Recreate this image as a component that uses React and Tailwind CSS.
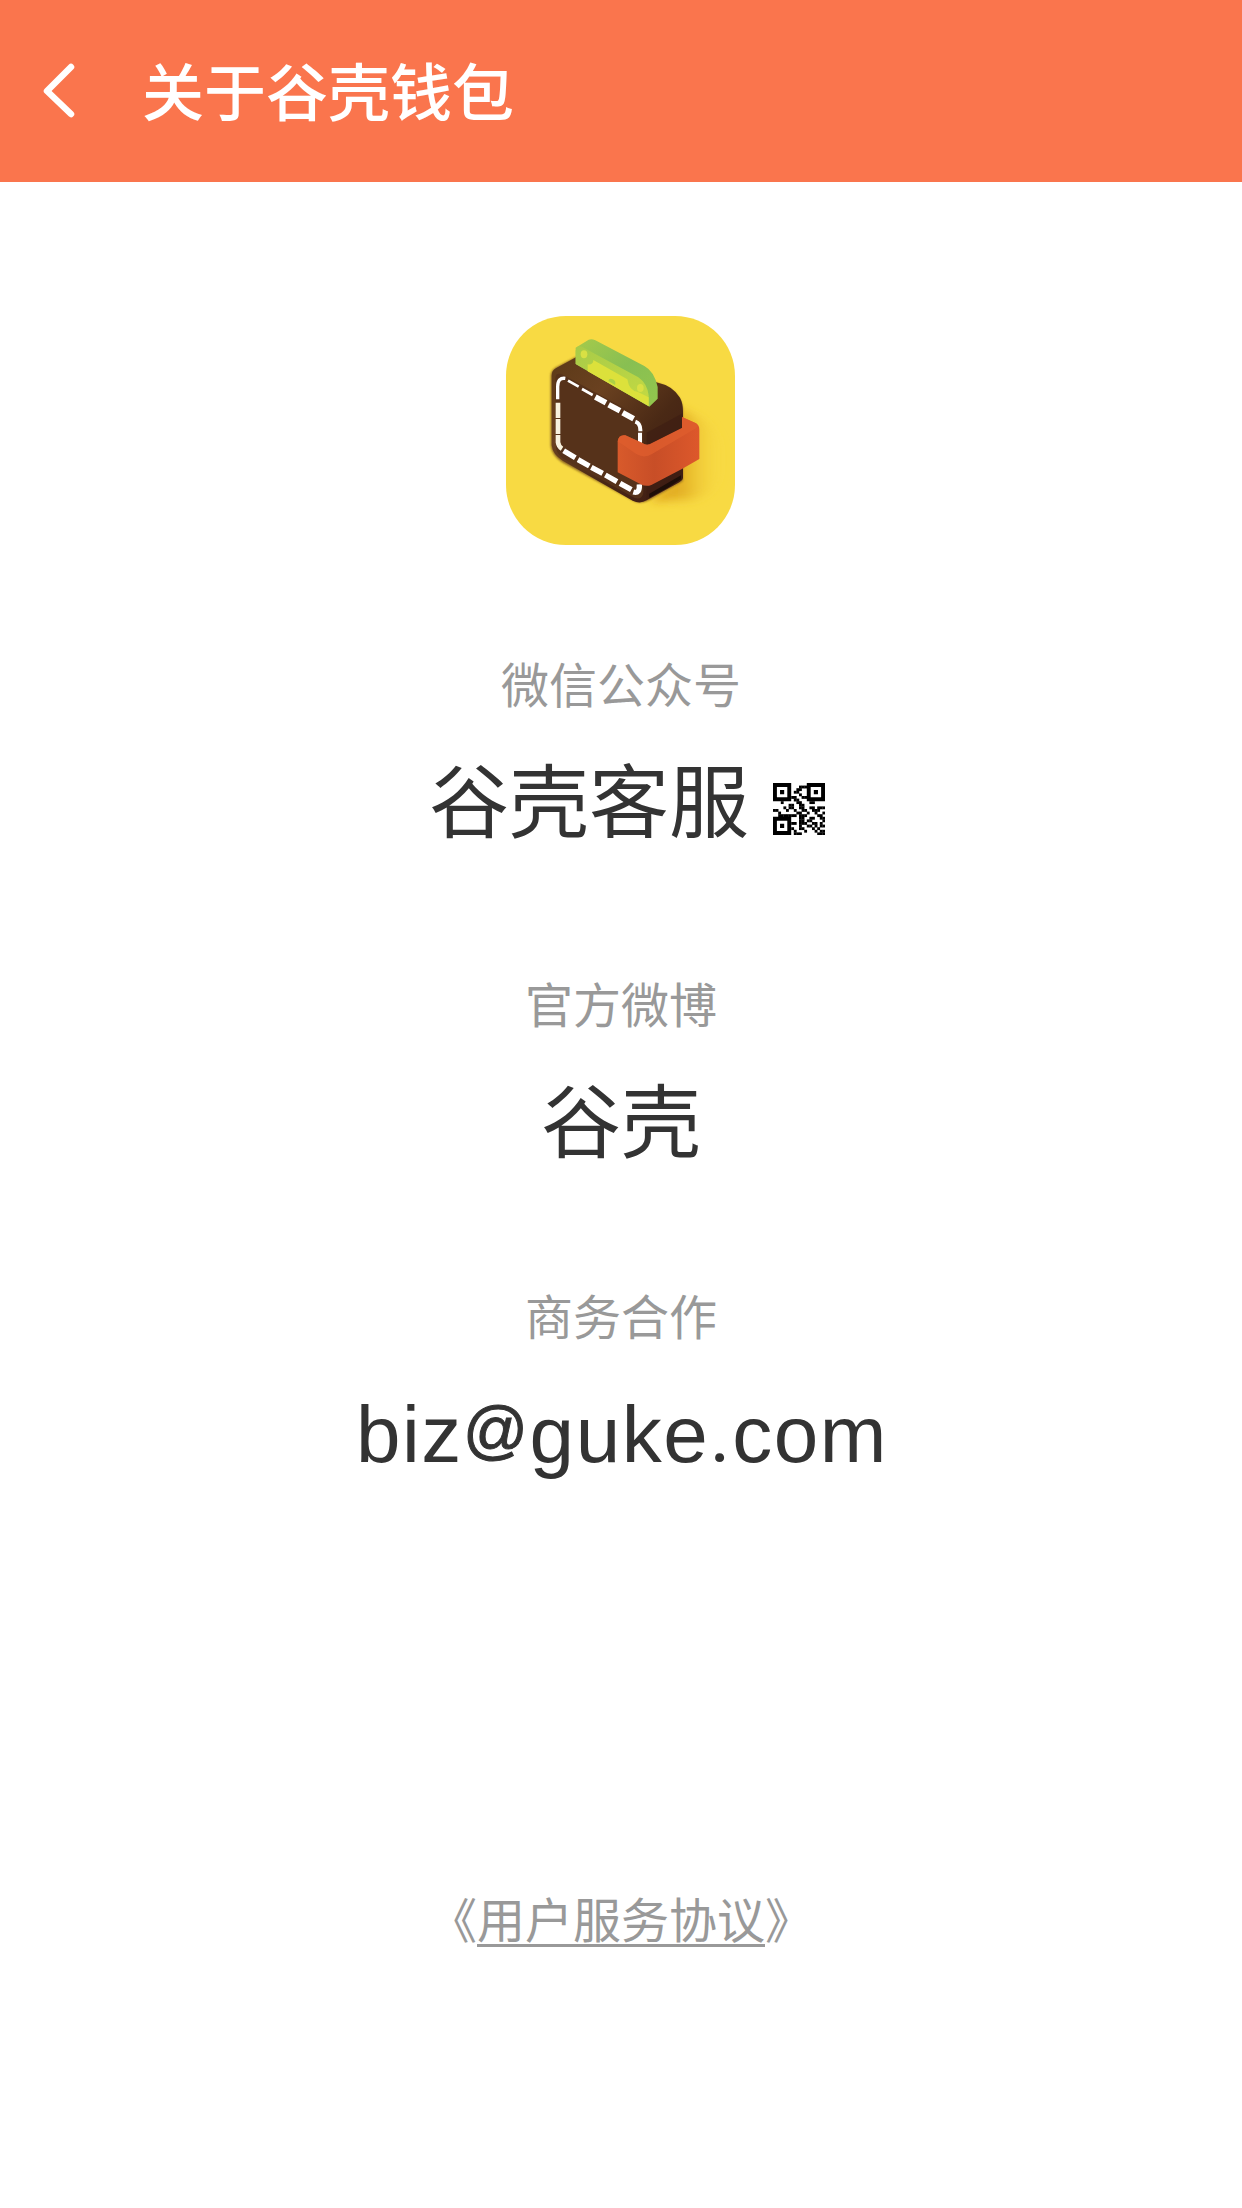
const CJK = "font-['Noto_Sans_CJK_SC',sans-serif]";

function Wallet() {
  return (
    <svg className="mr-px block h-[229px] w-[229px] rounded-[60px]" viewBox="0 0 687 687">
      <defs>
        <linearGradient id="shade" x1="0" y1="0" x2="1" y2="0">
          <stop offset="0" stopColor="#dc9d17" /><stop offset=".45" stopColor="#e5b327" /><stop offset="1" stopColor="#f8da43" stopOpacity="0" />
        </linearGradient>
        <linearGradient id="top" x1="0" y1="0" x2="1" y2="1">
          <stop offset="0" stopColor="#5c3a18" /><stop offset=".3" stopColor="#6a4120" /><stop offset=".62" stopColor="#4a2915" /><stop offset="1" stopColor="#3d1a14" />
        </linearGradient>
        <linearGradient id="green" x1="0" y1="0" x2="1" y2="1">
          <stop offset="0" stopColor="#a5ca4b" /><stop offset=".5" stopColor="#88bf52" /><stop offset="1" stopColor="#93c64d" />
        </linearGradient>
        <linearGradient id="lime" x1="0" y1="0" x2=".7" y2="1">
          <stop offset="0" stopColor="#a8cb48" /><stop offset="1" stopColor="#c0d843" />
        </linearGradient>
        <linearGradient id="strap" x1="0" y1="0" x2="1" y2="0">
          <stop offset="0" stopColor="#d85a2b" /><stop offset=".45" stopColor="#c84e27" /><stop offset="1" stopColor="#dd582b" />
        </linearGradient>
        <filter id="soft" x="-30%" y="-30%" width="160%" height="160%"><feGaussianBlur stdDeviation="14" /></filter>
        <filter id="edge"><feGaussianBlur stdDeviation="3" /></filter>
      </defs>
      <rect width="687" height="687" fill="#f8da43" />
      <path d="M520 275L592 312Q665 370 655 450Q645 530 560 550L430 556L500 500Z" fill="url(#shade)" filter="url(#soft)" />
      <path d="M134 180L134 390Q138 420 170 440L385 556Q405 565 430 552L530 495V280Q525 230 470 207L210 123L148 155Q134 165 134 180Z" fill="#8f6722" filter="url(#edge)" />
      <path d="M137 180Q136 162 152 155L210 124L456 200Q500 209 522 245Q531 262 531 285V485Q530 493 520 499L422 553Q402 565 380 554L170 434Q140 416 137 388Z" fill="url(#top)" />
      <path d="M148 186Q150 166 172 177L382 291Q409 306 412 340V530Q409 552 386 546L172 428Q151 414 150 392Z" fill="#56321a" />
      <path d="M422 350L530 292V490L422 550Z" fill="#3e1d12" opacity=".65" />
      <path d="M430 533L525 478V490L485 515L430 545Z" fill="#1e0e08" />
      <path d="M155 250V212Q155 184 178 187" fill="none" stroke="#fff" strokeWidth="10" />
      <path d="M186 194L218 212M228 219L260 237" fill="none" stroke="#fff" strokeWidth="8" />
      <path d="M268 243L300 260M308 266L342 284M350 290L383 308" fill="none" stroke="#fff" strokeWidth="17" />
      <path d="M388 317Q403 322 403 342V346M402 350V382" fill="none" stroke="#fff" strokeWidth="12" />
      <path d="M156 260V306M156 309V354M156 357V379Q158 392 168 398" fill="none" stroke="#f8f2df" strokeWidth="14" />
      <path d="M173 404L208 425M216 431L250 450M256 454L290 472M298 477L333 497M342 502L376 521M382 528Q402 534 400 505" fill="none" stroke="#fff" strokeWidth="16" />
      <path d="M209 95L248 71Q257 67 268 73L415 150Q445 166 455 213V248L430 272L209 144Z" fill="url(#green)" />
      <path d="M209 106Q211 83 233 95L397 184Q423 202 428 238V270L209 144Z" fill="url(#lime)" />
      <path d="M245 145Q262 147 262 132L364 190Q370 226 396 228L428 244V270L245 166Z" fill="#dce13b" />
      <ellipse cx="234" cy="115" rx="10" ry="12" fill="#d9e044" />
      <ellipse cx="403" cy="216" rx="10" ry="12" fill="#d9e044" />
      <path d="M307 195Q309 185 320 190T327 207Z" fill="#acd246" />
      <path d="M335 376Q338 355 358 358L409 381Q419 389 431 385L528 336V303L570 322Q580 328 580 341V429L529 458L436 507Q420 513 404 505L335 469Z" fill="url(#strap)" />
      <path d="M335 376Q338 355 358 358L409 381Q419 389 431 385L528 336V303L570 322Q580 328 570 337L438 414Q417 428 392 415Z" fill="#df5e2e" opacity=".75" />
    </svg>
  );
}

// Data modules of the QR code; the three finder squares are drawn separately.
const MODULES = [
  "00000000000000000000",
  "00000000001110000000",
  "00000000011000000000",
  "00000000110000000000",
  "00000000001000000000",
  "00000001100110000000",
  "00000000110000000000",
  "00010000011000110000",
  "00000011001100000000",
  "00001011001100110111",
  "11000100100110011100",
  "00100000011001001001",
  "00111111101110000110",
  "00000000001100110011",
  "00000000001101100001",
  "00000001101110011010",
  "00000000001001101011",
  "00000001001100010100",
  "00000000100010001011",
  "00000000111000000111",
];

function QrCode() {
  return (
    <svg className="block h-[52px] w-[52px]" viewBox="0 0 20 20">
      <path fillRule="evenodd" d="M0 0H7V7H0ZM1.5 1.5V5.5H5.5V1.5ZM13 0H20V7H13ZM14.5 1.5V5.5H18.5V1.5ZM0 13H7V20H0ZM1.5 14.5V18.5H5.5V14.5Z" />
      <path d="M2.7 2.7h1.6v1.6h-1.6zM15.7 2.7h1.6v1.6h-1.6zM2.7 15.7h1.6v1.6h-1.6z" />
      {MODULES.map((row, y) =>
        [...row].map((bit, x) => (bit === "1" ? <rect key={`${x}-${y}`} x={x} y={y} width="1.1" height="1.1" /> : null))
      )}
    </svg>
  );
}

function Entry({ label, children, className }) {
  return (
    <section className={`flex flex-col items-center ${className}`}>
      <h2 className="text-[48px] leading-[60px] font-normal text-[#999]">{label}</h2>
      {children}
    </section>
  );
}

export default function App() {
  return (
    <div className={`flex h-[2208px] w-[1242px] flex-col bg-white text-[#333] ${CJK}`}>
      <header className="flex h-[182px] shrink-0 items-center bg-[#fa754d] pl-[43px] text-white">
        <svg className="h-[56px] w-[32px] shrink-0" viewBox="0 0 32 56" fill="none" stroke="currentColor" strokeWidth="6.5" strokeLinecap="round" strokeLinejoin="round">
          <path d="M28 4L4 28L28 51" />
        </svg>
        <h1 className="ml-[67px] pb-[4px] text-[62px] leading-[80px] font-medium">关于谷壳钱包</h1>
      </header>
      <main className="flex flex-1 flex-col items-center pt-[134px]">
        <Wallet />
        <Entry label="微信公众号" className="mt-[107px]">
          <div className="mt-[34px] flex h-[100px] items-center pl-[12px]">
            <span className="text-[80px] leading-[100px]">谷壳客服</span>
            <span className="ml-[24px] pt-[26px]"><QrCode /></span>
          </div>
        </Entry>
        <Entry label="官方微博" className="mt-[126px]">
          <p className="mt-[34px] text-[80px] leading-[100px]">谷壳</p>
        </Entry>
        <Entry label="商务合作" className="mt-[118px]">
          <p className="mt-[41px] flex h-[100px] items-baseline pl-[2px] font-['Liberation_Sans',Arial,sans-serif] text-[80px] leading-[100px] tracking-[1.6px]">
            <span>biz</span>
            <span className="relative -top-[10px] text-[64px] [-webkit-text-stroke:1px_#333]">@</span>
            <span>guke<span className="font-['Roboto',sans-serif]">.</span>com</span>
          </p>
        </Entry>
        <a className="mt-[402px] flex text-[48px] leading-[60px] text-[#999]">《<span className="h-[60px] border-b-[3px] border-[#999] leading-[60px]">用户服务协议</span>》</a>
      </main>
    </div>
  );
}
